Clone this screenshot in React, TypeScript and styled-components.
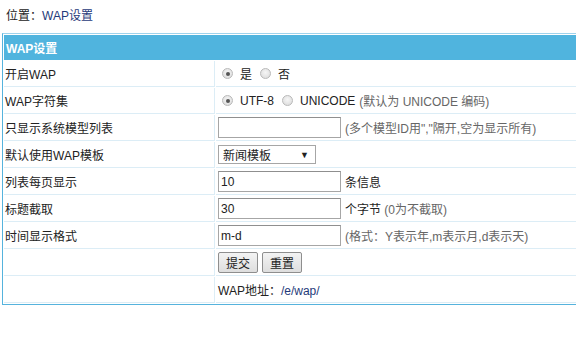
import React from "react";
import styled, { createGlobalStyle } from "styled-components";

const Global = createGlobalStyle`
  html, body { margin: 0; padding: 0; background: #fff; overflow: hidden; }
  body {
    font-family: "Liberation Sans", "Noto Sans CJK SC", sans-serif;
    font-size: 12px;
    color: #222;
  }
`;

const Page = styled.div`
  width: 600px;
  padding: 0 0 0 2px;
`;

const Crumb = styled.div`
  height: 33px;
  line-height: 33px;
  padding-left: 4px;
`;

const Link = styled.a`
  color: #1f3a7a;
  text-decoration: none;
`;

const Table = styled.table`
  width: 600px;
  border: 1px solid #55b3dd;
  border-top-color: #9fd3ec;
  border-spacing: 1px;
  border-collapse: separate;
  background: #fff;
`;

const HeadCell = styled.th`
  height: 25px;
  padding: 0 0 0 2px;
  background: #50b4de;
  color: #fff;
  font-weight: bold;
  text-align: left;
  font-size: 12px;
`;

const Row = styled.tr``;

const Cell = styled.td<{ $label?: boolean }>`
  height: 25px;
  padding: 0 0 0 ${(p) => (p.$label ? "1px" : "2px")};
  width: ${(p) => (p.$label ? "209px" : "auto")};
  border-bottom: 1px solid #dcedf6;
  border-right: ${(p) => (p.$label ? "1px solid #dcedf6" : "none")};
  white-space: nowrap;
  vertical-align: middle;
`;

const Inline = styled.div`
  display: flex;
  align-items: center;
  gap: 4px;
`;

const RadioLabel = styled.label`
  display: inline-flex;
  align-items: center;
  gap: 4px;
  margin-right: 0;
`;

const Radio = styled.span<{ $on?: boolean }>`
  position: relative;
  width: 11px;
  height: 11px;
  margin: 0 3px 0 4px;
  border-radius: 50%;
  border: 1px solid #b9b9b9;
  background: radial-gradient(circle at 50% 40%, #f6f6f6, #d8d8d8);
  box-sizing: border-box;
  &::after {
    content: "";
    display: ${(p) => (p.$on ? "block" : "none")};
    position: absolute;
    left: 2.5px;
    top: 2.5px;
    width: 4px;
    height: 4px;
    border-radius: 50%;
    background: #555;
  }
`;

const Note = styled.span`
  color: #666;
`;

const TextInput = styled.input`
  width: 123px;
  height: 21px;
  box-sizing: border-box;
  border: 1px solid #a6a6a6;
  border-top-color: #8f8f8f;
  padding: 0 2px;
  font-family: inherit;
  font-size: 12px;
  color: #222;
  margin: 0;
`;

const SelectBox = styled.div`
  width: 98px;
  height: 19px;
  box-sizing: border-box;
  border: 1px solid #a6a6a6;
  display: flex;
  align-items: center;
  justify-content: space-between;
  padding: 0 6px 0 4px;
  font-size: 12px;
`;

const Arrow = styled.span`
  font-size: 9px;
`;

const Button = styled.button`
  height: 21px;
  padding: 0 7px;
  font-family: inherit;
  font-size: 12px;
  color: #222;
  border: 1px solid #8e8e8e;
  border-radius: 2px;
  background: linear-gradient(#f3f3f3, #dedede);
  margin: 0;
`;

export default function App() {
  return (
    <Page>
      <Global />
      <Crumb>
        位置：<Link href="#">WAP设置</Link>
      </Crumb>
      <Table>
        <thead>
          <tr>
            <HeadCell colSpan={2}>WAP设置</HeadCell>
          </tr>
        </thead>
        <tbody>
          <Row>
            <Cell $label>开启WAP</Cell>
            <Cell>
              <Inline>
                <RadioLabel><Radio $on />是</RadioLabel>
                <RadioLabel><Radio />否</RadioLabel>
              </Inline>
            </Cell>
          </Row>
          <Row>
            <Cell $label>WAP字符集</Cell>
            <Cell>
              <Inline>
                <RadioLabel><Radio $on />UTF-8</RadioLabel>
                <RadioLabel>
                  <Radio />UNICODE <Note>(默认为 UNICODE 编码)</Note>
                </RadioLabel>
              </Inline>
            </Cell>
          </Row>
          <Row>
            <Cell $label>只显示系统模型列表</Cell>
            <Cell>
              <Inline>
                <TextInput defaultValue="" />
                <Note>(多个模型ID用","隔开,空为显示所有)</Note>
              </Inline>
            </Cell>
          </Row>
          <Row>
            <Cell $label>默认使用WAP模板</Cell>
            <Cell>
              <SelectBox>
                新闻模板<Arrow>▼</Arrow>
              </SelectBox>
            </Cell>
          </Row>
          <Row>
            <Cell $label>列表每页显示</Cell>
            <Cell>
              <Inline>
                <TextInput defaultValue="10" />
                <span>条信息</span>
              </Inline>
            </Cell>
          </Row>
          <Row>
            <Cell $label>标题截取</Cell>
            <Cell>
              <Inline>
                <TextInput defaultValue="30" />
                <span>
                  个字节 <Note>(0为不截取)</Note>
                </span>
              </Inline>
            </Cell>
          </Row>
          <Row>
            <Cell $label>时间显示格式</Cell>
            <Cell>
              <Inline>
                <TextInput defaultValue="m-d" />
                <Note>(格式：Y表示年,m表示月,d表示天)</Note>
              </Inline>
            </Cell>
          </Row>
          <Row>
            <Cell $label></Cell>
            <Cell>
              <Inline>
                <Button>提交</Button>
                <Button>重置</Button>
              </Inline>
            </Cell>
          </Row>
          <Row>
            <Cell $label></Cell>
            <Cell>
              WAP地址：<Link href="#">/e/wap/</Link>
            </Cell>
          </Row>
        </tbody>
      </Table>
    </Page>
  );
}
